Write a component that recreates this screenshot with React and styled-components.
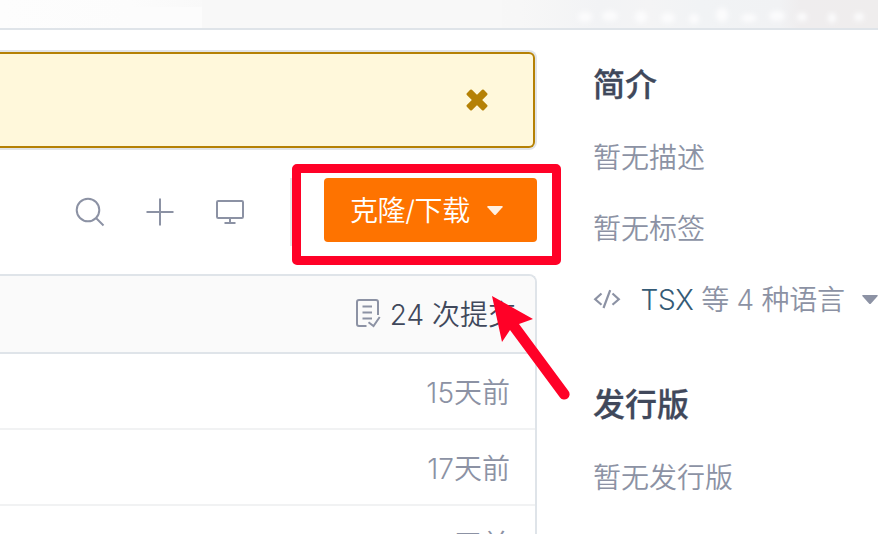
import React from "react";
import styled, { createGlobalStyle } from "styled-components";

const Global = createGlobalStyle`
  * { box-sizing: border-box; }
  body {
    margin: 0;
    overflow: hidden;
    background: #fff;
    font-family: Inter, "Noto Sans CJK SC", sans-serif;
    font-size: 28px;
    font-weight: 350;
    color: #8c92a4;
  }
  svg { display: block; flex: none; overflow: visible; }
`;

const Page = styled.div`
  width: 878px;
  height: 534px;
  overflow: hidden;
`;

const TopBar = styled.header`
  height: 30px;
  border-bottom: 2px solid #dfe4e9;
  overflow: hidden;
  background: linear-gradient(90deg, #fdfdfd 0, #fcfcfc 130px, #f9f9f9 205px, #f7f7f7 520px, #f2f3f5 600px, #f4f4f5 650px, #f1f3f5 700px, #f1f2f4 780px, #efedee 800px, #efeded 878px);
`;

const Columns = styled.div`
  display: grid;
  grid-template-columns: 537px 1fr;
  column-gap: 56px;
`;

const Main = styled.main`
  position: relative;
  display: flex;
  flex-direction: column;
  padding-top: 20px;
`;

const NoticeFrame = styled.div`
  height: 100px;
  border: 2px solid #e1e4e8;
  border-left: 0;
  border-radius: 0 8px 8px 0;
`;

const Notice = styled.div`
  height: 96px;
  display: flex;
  align-items: center;
  justify-content: flex-end;
  padding: 0 45.5px 1px 0;
  border: 2px solid #b58105;
  border-left: 0;
  border-radius: 0 6px 6px 0;
  background: #fff8db;
`;

const Toolbar = styled.div`
  height: 64px;
  margin: 28px 0 32px;
  display: flex;
  align-items: center;
  justify-content: space-between;
  padding-left: 75px;
`;

const Tools = styled.div`
  display: flex;
  gap: 40px;
  padding-top: 4px;
`;

const CloneButton = styled.button`
  width: 213px;
  height: 64px;
  display: flex;
  align-items: center;
  gap: 17px;
  padding: 0 0 0 26px;
  border: 0;
  border-radius: 4px;
  background: #fe7300;
  color: #fff;
  font: inherit;
  letter-spacing: -0.4px;
  white-space: nowrap;
`;

const CloneLabel = styled.span`
  padding-bottom: 2px;
`;

const Highlight = styled.div`
  position: absolute;
  left: 292px;
  top: 134px;
  width: 269px;
  height: 101px;
  border: 9px solid #ff0127;
  border-radius: 5px;
`;

const GroupEdge = styled.div`
  position: absolute;
  left: 290px;
  top: 148px;
  width: 2px;
  height: 68px;
  background: #e8e9eb;
`;

const Pointer = styled.svg`
  position: absolute;
  left: 486px;
  top: 260px;
`;

const Panel = styled.section`
  height: 290px;
  border: 2px solid #dfe4e9;
  border-width: 2px 2px 0 0;
  border-radius: 0 8px 0 0;
  overflow: hidden;
`;

const PanelHeader = styled.div`
  height: 78px;
  display: flex;
  align-items: center;
  justify-content: flex-end;
  gap: 9px;
  padding-right: 19px;
  border-bottom: 2px solid #dfe4e9;
  background: #fafafa;
  color: #40485b;
`;

const Commits = styled.span`
  line-height: 40px;
  padding-top: 1px;
`;

const Row = styled.div`
  height: 76px;
  display: flex;
  align-items: center;
  justify-content: flex-end;
  padding-right: 25px;
  border-bottom: 2px solid #f1f2f3;
`;

const Sidebar = styled.aside`
  white-space: nowrap;
`;

const Title = styled.h2`
  margin: 0;
  padding-top: ${(p) => p.$top}px;
  font-size: 32px;
  font-weight: 500;
  -webkit-text-stroke: 0.3px #40485b;
  line-height: 48px;
  color: #40485b;
`;

const Text = styled.p`
  margin: ${(p) => p.$top}px 0 0;
  line-height: 40px;
`;

const Languages = styled.div`
  display: flex;
  align-items: center;
  height: 40px;
  margin-top: 30px;
`;

const LanguageText = styled.span`
  margin: 0 17px 2px 20.5px;
  letter-spacing: -0.25px;
`;

const Language = styled.span`
  color: #355b76;
`;

const blobs = [
  [585, 17, 7, 5], [610, 16, 8, 5], [641, 17, 6, 6], [668, 18, 7, 5],
  [694, 19, 5, 5], [722, 15, 6, 7], [749, 18, 8, 4], [777, 16, 8, 5],
  [802, 17, 5, 4], [832, 18, 4, 5], [859, 17, 5, 4],
];

const Caret = ({ color }) => (
  <svg width="16" height="9" viewBox="0 0 16 9">
    <path d="M.8 0h14.4q1 .5.3 1.3L9 8.4q-1 1-2 0L.5 1.3Q-.2.5.8 0Z" fill={color} />
  </svg>
);

const SearchIcon = () => (
  <svg width="30" height="30" fill="none" stroke="#8c92a4" strokeWidth="2">
    <circle cx="13" cy="13" r="11.3" />
    <path d="m21 21 7.5 7.5" />
  </svg>
);

const PlusIcon = () => (
  <svg width="30" height="30" stroke="#8c92a4" strokeWidth="2">
    <path d="M1.5 15h27M15 1.5v27" />
  </svg>
);

const MonitorIcon = () => (
  <svg width="30" height="30" fill="none" stroke="#8c92a4" strokeWidth="2">
    <rect x="2" y="4" width="26" height="17" rx="1.2" />
    <path d="M15 21v5M9.5 26h11" />
  </svg>
);

const CloseIcon = () => (
  <svg width="22" height="22" viewBox="-11 -11 22 22" fill="#b58105">
    <rect x="-12" y="-3.6" width="24" height="7.2" rx="1.2" transform="rotate(45)" />
    <rect x="-12" y="-3.6" width="24" height="7.2" rx="1.2" transform="rotate(-45)" />
  </svg>
);

const CommitIcon = () => (
  <svg width="25" height="30" fill="none" stroke="#8c92a4" strokeWidth="2">
    <path d="M10.5 27H3q-2 0-2-2V3q0-2 2-2h17q2 0 2 2v13M6.5 7.5H16M6.5 13.5H16M6.5 19.5H16M12.5 23.3l5 3.7 6.2-9" />
  </svg>
);

const CodeIcon = () => (
  <svg width="27" height="20" fill="none" stroke="#8c92a4" strokeWidth="2.2">
    <path d="M8.5 4.5 2.2 10.2l6.3 5.6M19.5 4.5l6.3 5.7-6.3 5.6M17.2 1.2 10.5 19" />
  </svg>
);

export default function App() {
  return (
    <Page>
      <Global />
      <TopBar>
        <svg width="878" height="28">
          <defs>
            <filter id="soft" x="-50%" y="-50%" width="200%" height="200%">
              <feGaussianBlur stdDeviation="2.6" />
            </filter>
          </defs>
          <rect x="132" y="7" width="70" height="21" fill="#fcfcfc" />
          <rect x="202" y="0" width="300" height="28" fill="#f8f8f8" />
          {blobs.map(([cx, cy, rx, ry]) => (
            <ellipse key={cx} cx={cx} cy={cy} rx={rx} ry={ry} fill="#fcfcfd" filter="url(#soft)" />
          ))}
        </svg>
      </TopBar>
      <Columns>
        <Main>
          <NoticeFrame>
            <Notice><CloseIcon /></Notice>
          </NoticeFrame>
          <Toolbar>
            <Tools>
              <SearchIcon />
              <PlusIcon />
              <MonitorIcon />
            </Tools>
            <CloneButton>
              <CloneLabel>克隆/下载</CloneLabel>
              <Caret color="#fff0e2" />
            </CloneButton>
          </Toolbar>
          <Panel>
            <PanelHeader>
              <CommitIcon />
              <Commits>24 次提交</Commits>
            </PanelHeader>
            <Row>15天前</Row>
            <Row>17天前</Row>
            <Row>17天前</Row>
          </Panel>
          <GroupEdge />
          <Highlight />
          <Pointer width="90" height="115">
            <path d="M6 6 47 29 33 34 82.5 101A5.3 5.3 0 0 1 74 107.5L24 40 16 52Z" fill="#ff0127" />
          </Pointer>
        </Main>
        <Sidebar>
          <Title $top={31}>简介</Title>
          <Text $top={29}>暂无描述</Text>
          <Text $top={31}>暂无标签</Text>
          <Languages>
            <CodeIcon />
            <LanguageText><Language>TSX</Language> 等 4 种语言</LanguageText>
            <Caret color="#8c92a4" />
          </Languages>
          <Title $top={62}>发行版</Title>
          <Text $top={29}>暂无发行版</Text>
        </Sidebar>
      </Columns>
    </Page>
  );
}
